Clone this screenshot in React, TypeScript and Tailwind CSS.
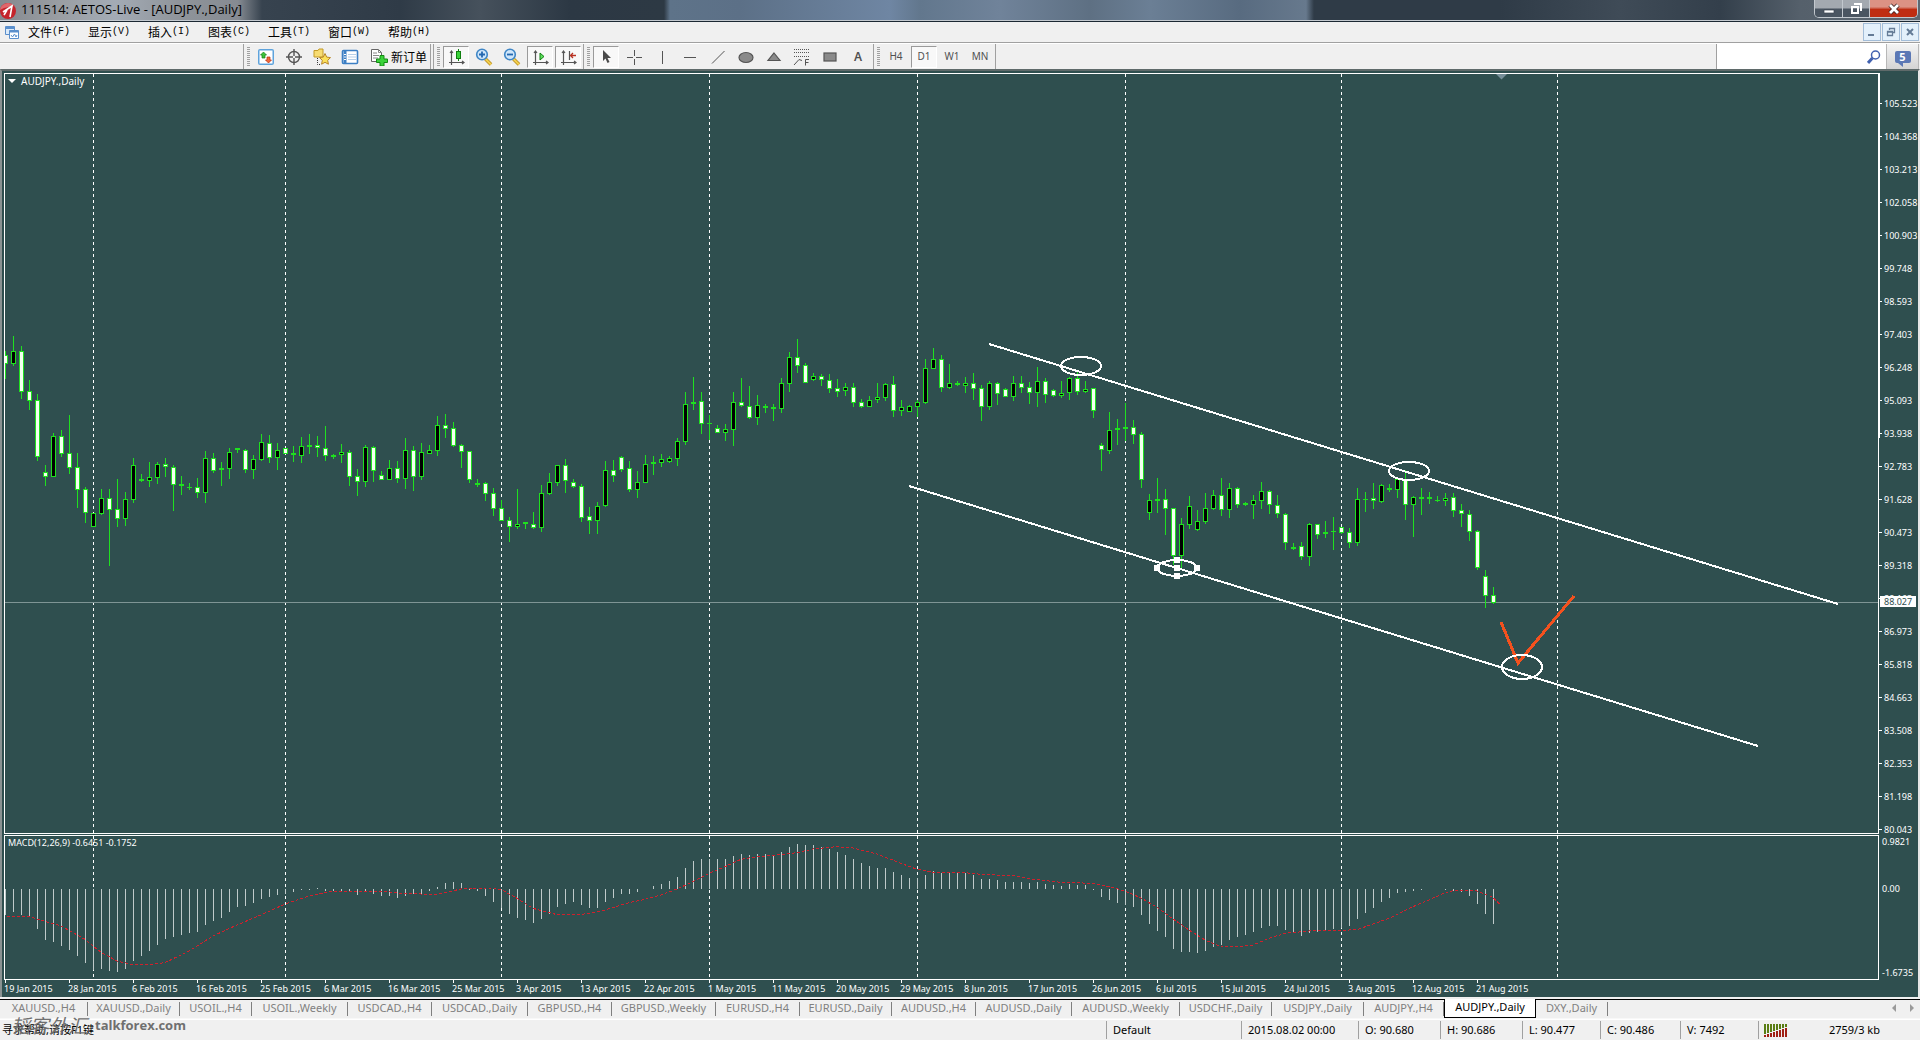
import type { ReactNode } from 'react'
import clsx from 'clsx'

// ── Chart data ──

const BAR_STEP = 8
const UNITS_PER_PX = 3
const CANDLE_TOP = 246
const MACD_ZERO = 53

// high, body top, body bottom, low (in chart units, growing downwards), bull
type Candle = [number, number, number, number, number]

const CANDLES: Candle[] = [
  [92, 105, 131, 178, 0], [48, 94, 131, 139, 1], [77, 94, 215, 237, 0], [180, 213, 242, 269, 0],
  [222, 240, 410, 422, 0], [435, 457, 470, 497, 0], [340, 348, 470, 470, 1], [330, 348, 402, 410, 0],
  [285, 400, 443, 461, 0], [399, 441, 509, 564, 0], [501, 507, 580, 608, 0], [580, 580, 620, 622, 1],
  [506, 534, 582, 585, 1], [506, 534, 570, 738, 0], [477, 567, 597, 621, 0], [516, 537, 597, 617, 1],
  [414, 435, 540, 548, 1], [463, 478, 482, 487, 1], [427, 472, 483, 502, 1], [427, 433, 473, 492, 1],
  [414, 433, 441, 470, 0], [436, 441, 494, 573, 0], [467, 492, 497, 525, 1], [488, 500, 503, 509, 1],
  [474, 501, 518, 533, 0], [394, 415, 518, 549, 1], [400, 414, 453, 458, 0], [427, 445, 451, 497, 1],
  [384, 397, 446, 478, 1], [384, 384, 391, 398, 0], [388, 391, 450, 458, 0], [405, 417, 449, 477, 1],
  [342, 367, 420, 423, 1], [346, 370, 413, 428, 0], [370, 391, 413, 450, 1], [384, 384, 401, 402, 0],
  [378, 399, 405, 425, 0], [350, 379, 407, 429, 1], [341, 376, 380, 402, 1], [348, 376, 385, 411, 0],
  [318, 385, 408, 422, 0], [402, 405, 412, 418, 1], [373, 397, 405, 430, 1], [390, 396, 470, 497, 0],
  [447, 468, 485, 527, 0], [376, 381, 485, 500, 1], [378, 381, 453, 485, 0], [453, 465, 480, 480, 0],
  [419, 444, 480, 480, 1], [423, 444, 476, 488, 0], [354, 391, 476, 508, 1], [378, 391, 470, 513, 0],
  [369, 397, 470, 480, 1], [375, 391, 401, 402, 1], [289, 316, 392, 407, 1], [282, 315, 327, 353, 0],
  [306, 324, 377, 380, 0], [372, 375, 396, 444, 0], [394, 394, 480, 489, 0], [476, 489, 494, 500, 1],
  [486, 489, 521, 543, 0], [505, 519, 566, 587, 0], [540, 564, 602, 603, 0], [590, 600, 620, 666, 0],
  [507, 612, 620, 628, 1], [606, 606, 612, 626, 0], [576, 612, 624, 626, 0], [495, 520, 623, 635, 1],
  [459, 487, 521, 526, 1], [435, 436, 488, 497, 1], [418, 436, 483, 519, 0], [477, 486, 500, 503, 0],
  [492, 498, 593, 605, 0], [560, 588, 602, 641, 0], [546, 558, 602, 641, 1], [424, 451, 557, 561, 1],
  [420, 450, 467, 485, 0], [409, 411, 450, 455, 0], [424, 445, 510, 515, 0], [453, 487, 509, 534, 1],
  [405, 433, 488, 490, 1], [409, 427, 433, 465, 1], [402, 418, 428, 440, 1], [409, 415, 425, 428, 1],
  [354, 364, 416, 437, 1], [217, 253, 366, 374, 1], [171, 247, 253, 270, 1], [217, 244, 311, 341, 0],
  [285, 310, 311, 359, 1], [316, 324, 338, 340, 0], [313, 328, 338, 362, 1], [217, 247, 329, 377, 1],
  [175, 247, 257, 260, 0], [198, 258, 293, 297, 0], [225, 256, 293, 315, 1], [252, 258, 264, 278, 1],
  [252, 261, 266, 303, 0], [175, 190, 266, 278, 1], [97, 112, 191, 217, 1], [56, 112, 137, 158, 0],
  [130, 136, 188, 188, 0], [160, 169, 179, 182, 1], [162, 168, 181, 198, 0], [162, 181, 206, 220, 0],
  [177, 205, 215, 232, 0], [190, 202, 212, 227, 1], [190, 202, 248, 260, 0], [237, 247, 260, 263, 0],
  [228, 241, 260, 260, 1], [189, 232, 241, 248, 1], [188, 193, 233, 242, 1], [169, 193, 272, 290, 0],
  [240, 262, 272, 287, 1], [256, 259, 275, 275, 1], [240, 247, 260, 290, 1], [116, 145, 248, 251, 1],
  [84, 118, 146, 147, 1], [105, 118, 203, 217, 0], [131, 190, 203, 206, 1], [183, 190, 195, 197, 1],
  [171, 190, 197, 218, 1], [160, 189, 206, 239, 0], [195, 205, 260, 303, 0], [183, 190, 260, 269, 1],
  [187, 190, 221, 254, 0], [204, 208, 230, 231, 0], [169, 190, 230, 242, 1], [169, 190, 203, 220, 0],
  [187, 202, 220, 251, 0], [141, 184, 220, 262, 1], [175, 184, 224, 248, 0], [207, 210, 227, 230, 0],
  [182, 220, 227, 234, 1], [171, 175, 220, 239, 1], [152, 175, 217, 224, 0], [183, 208, 217, 218, 1],
  [205, 205, 272, 293, 0], [368, 376, 391, 454, 0], [277, 331, 392, 402, 1], [298, 324, 331, 376, 1],
  [250, 322, 326, 362, 1], [299, 322, 345, 371, 0], [336, 342, 480, 503, 0], [521, 541, 578, 599, 1],
  [474, 537, 542, 578, 1], [507, 538, 566, 646, 0], [565, 565, 707, 735, 0], [595, 613, 707, 745, 1],
  [528, 559, 614, 626, 1], [571, 604, 629, 632, 1], [519, 565, 605, 611, 1], [511, 526, 566, 569, 1],
  [474, 526, 569, 587, 0], [489, 505, 569, 593, 1], [502, 505, 556, 565, 0], [545, 550, 555, 557, 1],
  [524, 541, 556, 597, 1], [486, 514, 542, 566, 1], [510, 514, 556, 581, 0], [525, 556, 583, 593, 0],
  [580, 583, 668, 689, 0], [668, 680, 686, 689, 1], [665, 679, 710, 721, 0], [610, 613, 710, 738, 1],
  [611, 613, 644, 656, 0], [602, 637, 643, 655, 1], [590, 634, 637, 691, 1], [620, 622, 638, 641, 0],
  [625, 637, 668, 685, 0], [505, 538, 668, 678, 1], [515, 536, 539, 575, 1], [489, 534, 544, 568, 0],
  [493, 495, 545, 550, 1], [491, 505, 511, 515, 0], [470, 478, 511, 533, 1], [450, 478, 554, 600, 0],
  [528, 532, 554, 650, 1], [503, 532, 536, 584, 1], [516, 532, 537, 551, 1], [529, 539, 543, 546, 1],
  [519, 533, 543, 557, 1], [519, 532, 572, 590, 0], [553, 570, 582, 621, 0], [569, 582, 635, 662, 0],
  [630, 634, 743, 749, 0], [750, 769, 827, 863, 0], [802, 825, 848, 851, 0],
]

// bar ends relative to the zero level, same units
const HISTOGRAM = [
  78, 69, 78, 83, 120, 153, 159, 171, 182, 201, 222, 243, 240, 246, 249, 240, 216, 201, 186, 168,
  150, 145, 138, 133, 129, 108, 96, 87, 69, 55, 51, 42, 30, 24, 18, 15, 9, 4, 3, -4,
  5, 5, 5, 9, 17, 9, 15, 21, 21, 27, 21, 15, 15, 6, -7, -19, -21, -19, 4, 5,
  21, 39, 57, 76, 87, 93, 102, 90, 76, 55, 45, 39, 49, 58, 58, 39, 27, 15, 15, 9,
  0, -9, -15, -24, -35, -63, -83, -90, -90, -90, -90, -99, -105, -101, -105, -104, -99, -110, -125, -135,
  -131, -132, -126, -119, -110, -102, -89, -78, -68, -63, -63, -50, -42, -33, -32, -42, -53, -47, -50, -50,
  -47, -42, -30, -30, -26, -21, -21, -21, -17, -20, -15, -12, -9, -15, -11, -11, 3, 24, 33, 42,
  48, 55, 79, 105, 126, 144, 180, 189, 189, 192, 186, 175, 168, 153, 144, 138, 129, 118, 111, 111,
  123, 133, 141, 132, 129, 126, 120, 118, 111, 90, 72, 57, 39, 28, 12, 9, 6, 3, 0, 0,
  3, 7, 9, 21, 45, 76, 105,
]

// [bar index, value]
const SIGNAL = [
  [-1, 83], [3, 83], [7, 111], [10, 151], [12, 190], [14, 216], [16, 227], [18, 227], [20, 221], [23, 186],
  [26, 141], [29, 108], [32, 78], [35, 45], [38, 21], [41, 6], [47, 6], [50, 14], [54, 16], [57, 0], [60, -2],
  [62, 1], [64, 28], [66, 58], [69, 77], [72, 77], [75, 63], [78, 41], [80, 31], [82, 18], [84, 0], [86, -22],
  [88, -47], [90, -67], [92, -89], [94, -97], [97, -103], [99, -109], [101, -120], [104, -127], [106, -123],
  [109, -105], [112, -77], [114, -59], [116, -50], [120, -49], [122, -44], [126, -40], [128, -31], [132, -20],
  [136, -17], [138, -7], [140, 6], [142, 27], [144, 55], [146, 90], [148, 123], [150, 153], [152, 173],
  [154, 174], [156, 168], [158, 148], [160, 133], [163, 126], [167, 124], [169, 122], [171, 105], [173, 88],
  [176, 53], [178, 33], [180, 11], [181, 5], [184, 6], [186, 25], [187, 50],
]

const MONTH_BARS = [11, 35, 62, 88, 114, 140, 167, 194]

const PRICES = [
  '105.523', '104.368', '103.213', '102.058', '100.903', '99.748', '98.593', '97.403', '96.248', '95.093',
  '93.938', '92.783', '91.628', '90.473', '89.318', '88.163', '86.973', '85.818', '84.663', '83.508',
  '82.353', '81.198', '80.043',
]

const DATES = [
  '19 Jan 2015', '28 Jan 2015', '6 Feb 2015', '16 Feb 2015', '25 Feb 2015', '6 Mar 2015', '16 Mar 2015',
  '25 Mar 2015', '3 Apr 2015', '13 Apr 2015', '22 Apr 2015', '1 May 2015', '11 May 2015', '20 May 2015',
  '29 May 2015', '8 Jun 2015', '17 Jun 2015', '26 Jun 2015', '6 Jul 2015', '15 Jul 2015', '24 Jul 2015',
  '3 Aug 2015', '12 Aug 2015', '21 Aug 2015',
]

const MENUS = [
  ['文件', '(F)'], ['显示', '(V)'], ['插入', '(I)'], ['图表', '(C)'], ['工具', '(T)'], ['窗口', '(W)'], ['帮助', '(H)'],
]

const TABS = [
  { name: 'XAUUSD.,H4', width: 'w-[88px]' },
  { name: 'XAUUSD.,Daily', width: 'w-[92px]' },
  { name: 'USOIL.,H4', width: 'w-[72px]' },
  { name: 'USOIL.,Weekly', width: 'w-[96px]' },
  { name: 'USDCAD.,H4', width: 'w-[84px]' },
  { name: 'USDCAD.,Daily', width: 'w-[96px]' },
  { name: 'GBPUSD.,H4', width: 'w-[84px]' },
  { name: 'GBPUSD.,Weekly', width: 'w-[104px]' },
  { name: 'EURUSD.,H4', width: 'w-[84px]' },
  { name: 'EURUSD.,Daily', width: 'w-[92px]' },
  { name: 'AUDUSD.,H4', width: 'w-[84px]' },
  { name: 'AUDUSD.,Daily', width: 'w-[96px]' },
  { name: 'AUDUSD.,Weekly', width: 'w-[108px]' },
  { name: 'USDCHF.,Daily', width: 'w-[92px]' },
  { name: 'USDJPY.,Daily', width: 'w-[92px]' },
  { name: 'AUDJPY.,H4', width: 'w-[80px]' },
  { name: 'AUDJPY.,Daily', width: 'w-[92px]' },
  { name: 'DXY.,Daily', width: 'w-[72px]' },
]
const ACTIVE_TAB = 'AUDJPY.,Daily'

const STATUS = [
  { text: 'Default', width: 'w-[135px]' },
  { text: '2015.08.02 00:00', width: 'w-[117px]' },
  { text: 'O: 90.680', width: 'w-[82px]' },
  { text: 'H: 90.686', width: 'w-[82px]' },
  { text: 'L: 90.477', width: 'w-[78px]' },
  { text: 'C: 90.486', width: 'w-[80px]' },
  { text: 'V: 7492', width: 'w-[78px]' },
]

// ── Title bar ──

function TitleBar() {
  return (
    <header className="relative flex h-[22px] shrink-0 items-start justify-between border-b border-[#1c2833] bg-[linear-gradient(90deg,#85898f_0,#9a9ea3_60px,#a3abb5_115px,#8f949a_180px,#868b92_238px,#37434f_262px,#2f3b47_400px,#46515c_480px,#2c3844_570px,#2d3944_664px,#5e7389_670px,#5c7087_740px,#6f86a3_890px,#62778d_920px,#70839a_1000px,#5e7083_1090px,#6b7f95_1150px,#586b80_1240px,#67798d_1306px,#2f3b47_1314px,#2f3b47_1500px,#3f4b57_1620px,#333f4b_1720px,#55606b_1800px,#5d6872_100%)] pr-[2px]">
      <div className="absolute inset-x-0 bottom-0 h-px bg-[#c3c9cf]" />
      <div className="flex h-5 items-center gap-[5px]">
        <svg width="16" height="20" viewBox="0 0 16 20">
          <circle cx="8" cy="11" r="8" fill="#c4242b" />
          <path d="M0 10a8 8 0 0 1 14-4L4 8z" fill="#e0666b" />
          <path d="M3 12l9-6-2 11M7 10l-3 5" stroke="#fff" strokeWidth="1.6" fill="none" />
        </svg>
        <h1 className="font-['Open_Sans','Noto_Sans',sans-serif] text-[13px] text-black">111514: AETOS-Live - [AUDJPY.,Daily]</h1>
      </div>
      <div className="flex h-[18px] overflow-hidden rounded-b-[5px] border border-t-0 border-[#c2c8ce]">
        <button aria-label="最小化" className="flex w-7 items-center justify-center border-r border-[#c2c8ce] bg-linear-to-b from-[#a3a9b0] from-45% to-[#4a5561] to-55%">
          <svg width="12" height="12"><path d="M1 7h10v3H1z" fill="#fff" stroke="#3c4550" strokeWidth=".7" /></svg>
        </button>
        <button aria-label="还原" className="flex w-[27px] items-center justify-center border-r border-[#c2c8ce] bg-linear-to-b from-[#a3a9b0] from-45% to-[#4a5561] to-55%">
          <svg width="12" height="13" fill="none" stroke="#fff" strokeWidth="2"><path d="M4 2h7v7M2 5h6v6H2z" /></svg>
        </button>
        <button aria-label="关闭" className="flex w-[47px] items-center justify-center bg-linear-to-b from-[#dc9284] from-40% to-[#bf2d12] to-55%">
          <svg width="12" height="12"><path d="M2 2l8 8M10 2l-8 8" stroke="#3c2020" strokeWidth="4.4" /><path d="M2 2l8 8M10 2l-8 8" stroke="#fff" strokeWidth="2.8" /></svg>
        </button>
      </div>
    </header>
  )
}

function MdiButton({ label, children }: { label: string; children: ReactNode }) {
  return (
    <button aria-label={label} className="flex h-[18px] w-[18px] items-center justify-center border border-[#a3bdd8] bg-[#e3f0fb]">
      <svg width="10" height="10" fill="none" stroke="#647b96">{children}</svg>
    </button>
  )
}

function MenuBar() {
  return (
    <nav className="flex h-[21px] shrink-0 items-center border-b border-[#a0a0a0] pr-px">
      <svg className="ml-[5px]" width="14" height="14" fill="none" stroke="#5b8fcc">
        <path d="M.5 1.500h9v8h-9z" fill="#dcebfa" />
        <path d="M.5 3h9" strokeWidth="2" />
        <path d="M4.500 5.500h9v8h-9z" fill="#fff" />
        <path d="M4.500 6.500h9" strokeWidth="2" />
        <path d="M6 10l1.500 2 2-3 1.500 3 1-2" />
      </svg>
      {MENUS.map(([name, key]) => (
        <button key={name} className="flex w-[60px] items-center pl-[9px] text-xs text-black">
          <span className="font-['Noto_Sans_CJK_SC',sans-serif]">{name}</span>
          <span className="font-['Liberation_Mono',monospace] text-[10px]">{key}</span>
        </button>
      ))}
      <div className="ml-auto flex gap-px">
        <MdiButton label="最小化图表"><path d="M1 8h6" strokeWidth="2" /></MdiButton>
        <MdiButton label="还原图表"><path d="M3.500 3V1.500h5v4H7M3.500 1.500h5M1.500 4.500h5v4h-5zM1.500 5h5" strokeWidth="1.3" /></MdiButton>
        <MdiButton label="关闭图表"><path d="M2 2l6 6M8 2l-6 6" strokeWidth="2" /></MdiButton>
      </div>
    </nav>
  )
}

// ── Toolbar ──

function Tool({ label, pressed, children }: { label: string; pressed?: boolean; children: ReactNode }) {
  return (
    <button
      aria-label={label}
      className={clsx(
        'flex h-[22px] w-[26px] items-center justify-center border text-[10px] text-[#505050]',
        pressed ? 'border-t-[#9a9a9a] border-l-[#9a9a9a] border-r-white border-b-white bg-[#f8f8f8]' : 'border-transparent',
      )}
    >
      {children}
    </button>
  )
}

function Icon({ children }: { children: ReactNode }) {
  return (
    <svg width="18" height="18" viewBox="0 0 18 18" fill="none" stroke="#555" className="shrink-0">
      {children}
    </svg>
  )
}

function Grip() {
  return <div className="mx-[3px] h-[20px] w-[3px] shrink-0 bg-[repeating-linear-gradient(180deg,#a0a0a0_0,#a0a0a0_1px,transparent_1px,transparent_2px)]" />
}

function Divider() {
  return <div className="h-[25px] w-px shrink-0 bg-[#a0a0a0]" />
}

function Magnifier({ sign }: { sign: string }) {
  return (
    <Icon>
      <path d="M10.500 11l5.500 5.500" stroke="#b58a1c" strokeWidth="3.600" />
      <path d="M10.500 11l5.500 5.500" stroke="#f3cf4e" strokeWidth="2" />
      <circle cx="7" cy="6.500" r="5.300" fill="#cfe6fa" stroke="#3f86c6" strokeWidth="1.600" />
      <path d={sign} stroke="#2468b0" strokeWidth="1.800" />
    </Icon>
  )
}

function Toolbar() {
  return (
    <div className="flex h-[26px] shrink-0 items-center border-t border-white font-['Noto_Sans','Open_Sans',sans-serif]">
      <div className="w-[243px] shrink-0" />
      <Divider />
      <Grip />
      <div className="flex gap-[2px]">
        <Tool label="市场报价">
          <Icon>
            <rect x="1" y="1" width="16" height="16" rx="2" fill="#5ea3dc" stroke="none" />
            <rect x="2.500" y="2.500" width="13" height="13" fill="#fff" stroke="none" />
            <path d="M6.500 4l3 3H8v3H5V7H3.500z" fill="#3cc23c" stroke="#188018" strokeWidth=".7" />
            <path d="M11.500 15l-3-3H10V9h3v3h1.500z" fill="#f0683c" stroke="#b83010" strokeWidth=".7" />
          </Icon>
        </Tool>
        <Tool label="数据窗口">
          <Icon>
            <circle cx="9" cy="9" r="5.500" strokeWidth="1.400" />
            <path d="M9 1v7M9 10v7M1 9h7M10 9h7" strokeWidth="1.400" />
          </Icon>
        </Tool>
        <Tool label="导航">
          <Icon>
            <path d="M1 2.500h4l1-1.500h4v8H1z" fill="#f7dc72" stroke="#c39a26" />
            <path d="M4.500 10v6.500H8" stroke="#333" strokeDasharray="1 1" />
            <path d="M12 5.500l1.700 3.600 3.800.5-2.800 2.700.7 3.900-3.400-1.900-3.400 1.900.7-3.900-2.800-2.700 3.800-.5z" fill="#fbe05a" stroke="#b8862a" />
          </Icon>
        </Tool>
        <Tool label="终端">
          <Icon>
            <rect x="1.500" y="2.500" width="15" height="13" rx="1" fill="#fff" stroke="#3c7fc4" strokeWidth="1.600" />
            <path d="M4 3v12" stroke="#3c7fc4" strokeWidth="3" />
            <path d="M7 6.500h8M7 9h8M7 11.500h8" stroke="#b6cfe8" />
            <path d="M3 6.500h2M3 9h2M3 11.500h2" stroke="#fff" />
          </Icon>
        </Tool>
      </div>
      <button className="flex h-[22px] items-center gap-[3px] pr-[3px] pl-[7px] font-['Noto_Sans_CJK_SC',sans-serif] text-xs text-black">
        <Icon>
          <path d="M1.500 1.500h7l3 3v9h-10z" fill="#fff" stroke="#666" />
          <path d="M8.500 1.500v3h3M3 5h4M3 7.500h6M3 10h5" stroke="#888" />
          <path d="M10 7.500h4v3.500h3.500v3.500H14V18h-4v-3.500H6.500V11H10z" fill="#3ad23a" stroke="#128a12" />
        </Icon>
        新订单
      </button>
      <Divider />
      <div className="w-[2px] shrink-0" />
      <Divider />
      <Grip />
      <div className="flex gap-[2px] pr-[2px]">
        <Tool label="蜡烛图" pressed>
          <Icon>
            <path d="M4.500 3v14M2 14.500h15M3 5l1.500-2L6 5M15 13l2 1.500-2 1.500" strokeWidth="1.200" />
            <path d="M11.500 1v12" stroke="#108010" />
            <rect x="9.500" y="3.500" width="4" height="7" fill="#3ad23a" stroke="#108010" />
          </Icon>
        </Tool>
        <Tool label="放大"><Magnifier sign="M4 6.500h6M7 3.500v6" /></Tool>
        <Tool label="缩小"><Magnifier sign="M4 6.500h6" /></Tool>
        <Tool label="自动滚动" pressed>
          <Icon>
            <path d="M4.500 3v14M2 14.500h15M3 5l1.500-2L6 5M15 13l2 1.500-2 1.500" strokeWidth="1.200" />
            <path d="M9 5v7l4-3.500z" fill="#5ee05e" stroke="#108010" />
          </Icon>
        </Tool>
        <Tool label="图表平移" pressed>
          <Icon>
            <path d="M4.500 3v14M2 14.500h15M3 5l1.500-2L6 5M15 13l2 1.500-2 1.500M10.500 3v9" strokeWidth="1.200" />
            <path d="M17 7.500h-5M14 5l-2.500 2.500L14 10" stroke="#b83020" strokeWidth="1.300" />
          </Icon>
        </Tool>
      </div>
      <Divider />
      <Grip />
      <div className="flex gap-[2px] pr-[2px]">
        <Tool label="光标" pressed><Icon><path d="M6 2v11l2.500-2.500L10.500 15l2-1-2-4H14z" fill="#4a4a4a" stroke="none" /></Icon></Tool>
        <Tool label="十字准线"><Icon><path d="M9.500 2v6M9.500 11v6M2 9.500h6M11 9.500h6" /></Icon></Tool>
        <Tool label="垂直线"><Icon><path d="M9.500 3v13" /></Icon></Tool>
        <Tool label="水平线"><Icon><path d="M3 9.500h12" /></Icon></Tool>
        <Tool label="趋势线"><Icon><path d="M3 15.500L15.500 3" /></Icon></Tool>
        <Tool label="椭圆"><Icon><ellipse cx="9" cy="9.500" rx="7" ry="5" fill="#8a8a8a" strokeWidth="1.200" /></Icon></Tool>
        <Tool label="三角形"><Icon><path d="M9 5l6 7.500H3z" fill="#8a8a8a" strokeWidth="1.200" /></Icon></Tool>
        <Tool label="斐波那契">
          <Icon>
            <path d="M1 1.500h16M1 4.500h16M1 8.500h16" strokeDasharray="1 1" />
            <path d="M1 17l5-5.500 3 1M12.500 17.500v-6H16M12.500 14.500h3" />
          </Icon>
        </Tool>
        <Tool label="矩形"><Icon><rect x="3" y="5" width="12" height="8" fill="#8a8a8a" strokeWidth="1.200" /></Icon></Tool>
        <Tool label="文字"><span className="text-xs font-semibold">A</span></Tool>
      </div>
      <Divider />
      <Grip />
      <div className="flex gap-[2px] pr-[2px]">
        {['H4', 'D1', 'W1', 'MN'].map((frame) => (
          <Tool key={frame} label={frame} pressed={frame === 'D1'}>{frame}</Tool>
        ))}
      </div>
      <Divider />
      <div className="ml-auto flex h-full pr-px">
        <label className="flex w-[170px] items-center border-l border-[#a0a0a0] bg-white pr-[5px]">
          <input aria-label="搜索" className="min-w-0 flex-1 bg-transparent text-xs outline-none" />
          <svg width="14" height="14" fill="none" stroke="#4262b0">
            <circle cx="8.500" cy="5" r="4" strokeWidth="1.500" />
            <path d="M5.500 8L1 13" strokeWidth="3" />
          </svg>
        </label>
        <button className="flex w-[33px] items-center justify-center border-x border-[#b8b8b8] bg-linear-to-b from-[#f4f4f4] to-[#d4d4d4]">
          <span className="relative flex h-3 w-4 items-center justify-center rounded-[2px] bg-[#5b78b5] text-[11px] leading-3 font-bold text-white">
            5
            <svg className="absolute top-3 left-[3px]" width="5" height="4"><path d="M0 0h5v4z" fill="#5b78b5" /></svg>
          </span>
        </button>
      </div>
    </div>
  )
}

// ── Chart ──

function MonthLines() {
  return (
    <g stroke="#fff" strokeDasharray="3 3" shapeRendering="crispEdges">
      {MONTH_BARS.map((i) => (
        <line key={i} x1={i * BAR_STEP + 0.5} x2={i * BAR_STEP + 0.5} y1="0" y2="100%" />
      ))}
    </g>
  )
}

function Candles() {
  const toY = (v: number) => CANDLE_TOP + Math.round(v / UNITS_PER_PX)
  return (
    <g shapeRendering="crispEdges">
      {CANDLES.map(([high, top, bottom, low, bull], i) => {
        const x = i * BAR_STEP
        const bodyTop = toY(top)
        const bodyHeight = Math.max(toY(bottom) - bodyTop, 1)
        return (
          <g key={i}>
            <rect x={x} y={toY(high)} width="1" height={toY(low) - toY(high)} fill="#1fe01f" />
            <rect x={x - 2} y={bodyTop} width="5" height={bodyHeight} fill="#1fe01f" />
            {bodyHeight > 2 && (
              <rect x={x - 1} y={bodyTop + 1} width="3" height={bodyHeight - 2} fill={bull ? '#000' : '#f4fff0'} />
            )}
          </g>
        )
      })}
    </g>
  )
}

function Drawings() {
  return (
    <g fill="none" stroke="#fff" strokeWidth="2" shapeRendering="crispEdges">
      <path d="M984 270L1833 530M904 412L1753 672" />
      <path d="M1496 548L1513 589L1569 522" stroke="#f4511e" strokeWidth="3" />
      <ellipse cx="1076" cy="292" rx="20" ry="9" />
      <ellipse cx="1404" cy="397" rx="20" ry="9" />
      <ellipse cx="1172" cy="494" rx="20" ry="8" />
      <ellipse cx="1517" cy="593" rx="20" ry="12" />
      <path d="M1149 491h6v6h-6zM1189 491h6v6h-6zM1169 483h6v6h-6zM1169 491h6v6h-6zM1169 499h6v6h-6z" fill="#fff" stroke="none" />
    </g>
  )
}

function PricePane() {
  return (
    <div className="flex min-h-0 flex-1">
      <section className="relative min-w-0 flex-1 overflow-hidden border border-white">
        <svg className="absolute inset-0 h-full w-full">
          <MonthLines />
          <path d="M0 528.500h1880" stroke="#7f9595" shapeRendering="crispEdges" />
          <Candles />
          <Drawings />
          <path d="M1491 0h11l-5.500 5.500z" fill="#778f99" />
        </svg>
        <h2 className="relative flex items-center gap-[5px] pl-[3px] text-[10px] leading-[14px] text-white">
          <svg width="8" height="4"><path d="M0 0h8L4 4z" fill="#fff" /></svg>
          AUDJPY.,Daily
        </h2>
      </section>
      <aside className="relative w-[39px] shrink-0 pt-[14px]">
        <div className="absolute top-0 left-0 h-[365px] w-px bg-white" />
        {PRICES.map((price) => (
          <div key={price} className="flex h-[33px] items-center gap-[2px]">
            <i className="h-px w-[3px] bg-white" />
            {price}
          </div>
        ))}
        <div className="absolute top-[523px] left-px h-[11px] w-9 bg-white pl-1 leading-[11px] text-[#2f4f4f]">88.027</div>
      </aside>
    </div>
  )
}

function MacdPane() {
  const points = SIGNAL.map(([i, v]) => `${i * BAR_STEP},${MACD_ZERO + v / UNITS_PER_PX}`).join(' ')
  return (
    <div className="flex h-[145px] shrink-0">
      <section className="relative min-w-0 flex-1 overflow-hidden border border-white">
        <svg className="absolute inset-0 h-full w-full">
          <MonthLines />
          <g fill="#bfcaca" shapeRendering="crispEdges">
            {HISTOGRAM.map((v, i) => {
              const h = Math.round(Math.abs(v) / UNITS_PER_PX)
              return <rect key={i} x={i * BAR_STEP} y={v < 0 ? MACD_ZERO - h : MACD_ZERO} width="1" height={h} />
            })}
          </g>
          <polyline points={points} fill="none" stroke="#d0202c" strokeDasharray="3 2" shapeRendering="crispEdges" />
        </svg>
        <h2 className="relative pl-[3px] text-[9px] leading-[14px] text-white">MACD(12,26,9) -0.6451 -0.1752</h2>
      </section>
      <aside className="flex w-[39px] shrink-0 flex-col justify-between pb-px pl-[3px] leading-3">
        <span className="pt-px">0.9821</span>
        <span className="pb-[38px]">0.00</span>
        <span>-1.6735</span>
      </aside>
    </div>
  )
}

function ChartWindow() {
  return (
    <main className="flex min-h-0 flex-1 flex-col border-x-2 border-t-2 border-t-[#5f6a6a] border-r-[#e6e6e6] border-l-[#8a9292] bg-[#2f4f4f] pt-[2px] pl-[2px] font-['Noto_Sans','Open_Sans',sans-serif] text-[9px] text-white">
      <PricePane />
      <div className="h-px shrink-0" />
      <MacdPane />
      <div className="flex h-[17px] shrink-0 overflow-hidden">
        {DATES.map((date) => (
          <div key={date} className="w-16 shrink-0 whitespace-nowrap">
            <div className="ml-px h-[3px] w-px bg-white" />
            <div className="leading-3">{date}</div>
          </div>
        ))}
      </div>
    </main>
  )
}

// ── Bottom bars ──

function TabBar() {
  return (
    <div className="flex h-[22px] shrink-0 border-b border-[#f8f8f8] pt-[2px] font-['Noto_Sans','Open_Sans',sans-serif] text-[11px]">
      <div className="flex min-w-0 flex-1 items-start border-t border-black">
        {TABS.map(({ name, width }) =>
          name === ACTIVE_TAB ? (
            <button key={name} className={clsx('-mt-px h-[19px] shrink-0 border border-t-0 border-black bg-white pb-[2px] leading-4 text-black', width)}>
              {name}
            </button>
          ) : (
            <button key={name} className={clsx('mt-[2px] h-[14px] shrink-0 border-r border-[#808080] pb-[3px] leading-[11px] whitespace-nowrap text-[#808080]', width)}>
              {name}
            </button>
          ),
        )}
        <div className="mt-1 mr-[6px] ml-auto flex gap-3">
          <button aria-label="向左滚动"><svg width="5" height="8"><path d="M4 0v8L0 4z" fill="#9a9a9a" /></svg></button>
          <button aria-label="向右滚动"><svg width="5" height="8"><path d="M1 0v8l4-4z" fill="#9a9a9a" /></svg></button>
        </div>
      </div>
    </div>
  )
}

function StatusBar() {
  return (
    <footer className="relative flex h-[21px] shrink-0 items-center border-t border-white font-['Noto_Sans','Noto_Sans_CJK_SC',sans-serif] text-[11px] text-black">
      <p className="min-w-0 flex-1 pl-[2px]">寻求帮助,请按F1键</p>
      {STATUS.map(({ text, width }) => (
        <div key={text} className={clsx('h-[18px] shrink-0 border-l border-[#a0a0a0] pl-[6px] leading-[18px]', width)}>{text}</div>
      ))}
      <div className="flex h-[18px] w-[162px] shrink-0 items-center justify-between border-l border-[#a0a0a0] pr-10 pl-[5px]">
        <svg width="24" height="13" shapeRendering="crispEdges">
          {[0, 1, 2, 3, 4, 5, 6, 7].map((n) => (
            <g key={n}>
              <rect x={n * 3} y="0" width="2" height={10 - n} fill="#5a7d14" />
              <rect x={n * 3} y={11 - n} width="2" height={2 + n} fill="#a02014" />
            </g>
          ))}
        </svg>
        2759/3 kb
      </div>
      <div className="absolute bottom-[5px] left-[11px] flex items-center gap-2 leading-5 text-[#6f6f6f]">
        <span className="font-['Noto_Sans_CJK_SC',sans-serif] text-[19px] italic">韬客外汇</span>
        <span className="font-['Open_Sans',sans-serif] text-[13px] font-bold">talkforex.com</span>
      </div>
    </footer>
  )
}

export default function App() {
  return (
    <div className="flex h-screen flex-col overflow-hidden bg-[#f0f0f0]">
      <TitleBar />
      <MenuBar />
      <Toolbar />
      <ChartWindow />
      <TabBar />
      <StatusBar />
    </div>
  )
}
